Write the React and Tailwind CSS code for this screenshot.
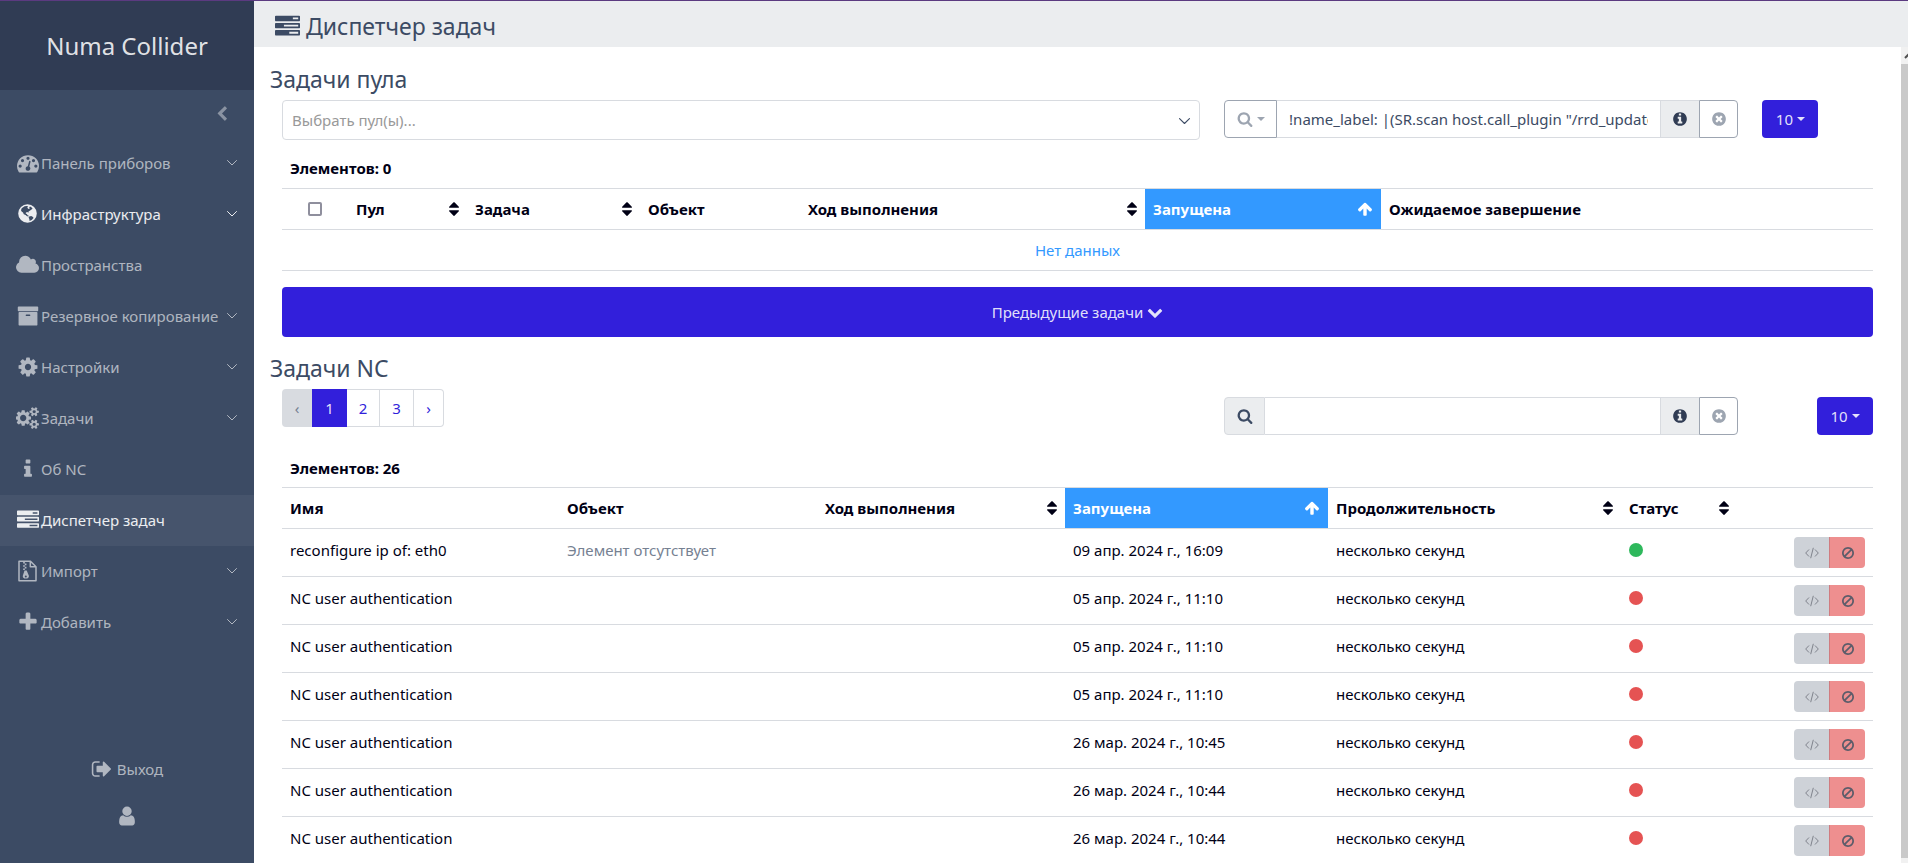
import React, { useState } from "react";

const PATHS = {
  dashboard:
    "M384 1152q0-53-37.5-90.5t-90.5-37.5-90.5 37.5-37.5 90.5 37.5 90.5 90.5 37.5 90.5-37.5 37.5-90.5zm192-448q0-53-37.5-90.5t-90.5-37.5-90.5 37.5-37.5 90.5 37.5 90.5 90.5 37.5 90.5-37.5 37.5-90.5zm428 481l101-382q6-26-7.5-48.5t-38.5-29.5-48 6.5-30 39.5l-101 382q-60 5-107 43.5t-63 98.5q-20 77 20 146t117 89 146-20 89-117q16-60-6-117t-72-91zm660-33q0-53-37.5-90.5t-90.5-37.5-90.5 37.5-37.5 90.5 37.5 90.5 90.5 37.5 90.5-37.5 37.5-90.5zm-640-640q0-53-37.5-90.5t-90.5-37.5-90.5 37.5-37.5 90.5 37.5 90.5 90.5 37.5 90.5-37.5 37.5-90.5zm448 192q0-53-37.5-90.5t-90.5-37.5-90.5 37.5-37.5 90.5 37.5 90.5 90.5 37.5 90.5-37.5 37.5-90.5zm320 448q0 261-141 483-19 29-54 29h-1402q-35 0-54-29-141-221-141-483 0-182 71-348t191-286 286-191 348-71 348 71 286 191 191 286 71 348z",
  tasks:
    "M1024 1408h640v-128h-640v128zm-384-512h1024v-128h-1024v128zm640-512h384v-128h-384v128zm512 832v256q0 26-19 45t-45 19h-1664q-26 0-45-19t-19-45v-256q0-26 19-45t45-19h1664q26 0 45 19t19 45zm0-512v256q0 26-19 45t-45 19h-1664q-26 0-45-19t-19-45v-256q0-26 19-45t45-19h1664q26 0 45 19t19 45zm0-512v256q0 26-19 45t-45 19h-1664q-26 0-45-19t-19-45v-256q0-26 19-45t45-19h1664q26 0 45 19t19 45z",
  cloud:
    "M1856 1152q0 159-112.5 271.5t-271.5 112.5h-1088q-185 0-316.5-131.5t-131.5-316.5q0-132 71-241.5t187-163.5q-2-28-2-43 0-212 150-362t362-150q158 0 286.5 88t187.5 230q70-62 166-62 106 0 181 75t75 181q0 75-41 138 129 30 213 134.5t84 239.5z",
  archive:
    "M1088 832q0-26-19-45t-45-19h-256q-26 0-45 19t-19 45 19 45 45 19h256q26 0 45-19t19-45zm576-192v960q0 26-19 45t-45 19h-1408q-26 0-45-19t-19-45v-960q0-26 19-45t45-19h1408q26 0 45 19t19 45zm64-448v256q0 26-19 45t-45 19h-1536q-26 0-45-19t-19-45v-256q0-26 19-45t45-19h1536q26 0 45 19t19 45z",
  cog: "M1152 896q0-106-75-181t-181-75-181 75-75 181 75 181 181 75 181-75 75-181zm512-109v222q0 12-8 23t-20 13l-185 28q-19 54-39 91 35 50 107 138 10 12 10 25t-9 23q-27 37-99 108t-94 71q-12 0-26-9l-138-108q-44 23-91 38-16 136-29 186-7 28-36 28h-222q-14 0-24.5-8.5t-11.5-21.5l-28-184q-49-16-90-37l-141 107q-10 9-25 9-14 0-25-11-126-114-165-168-7-10-7-23 0-12 8-23 15-21 51-66.5t54-70.5q-27-50-41-99l-183-27q-13-2-21-12.5t-8-23.5v-222q0-12 8-23t19-13l186-28q14-46 39-92-40-57-107-138-10-12-10-24 0-10 9-23 26-36 98.5-107.5t94.5-71.5q13 0 26 10l138 107q44-23 91-38 16-136 29-186 7-28 36-28h222q14 0 24.5 8.5t11.5 21.5l28 184q49 16 90 37l142-107q9-9 24-9 13 0 25 10 129 119 165 170 7 8 7 22 0 12-8 23-15 21-51 66.5t-54 70.5q26 50 41 98l183 28q13 2 21 12.5t8 23.5z",
  cogs: "M832 896q0-106-75-181t-181-75-181 75-75 181 75 181 181 75 181-75 75-181zm768 512q0-52-38-90t-90-38-90 38-38 90q0 53 37.5 90.5t90.5 37.5 90.5-37.5 37.5-90.5zm0-1024q0-52-38-90t-90-38-90 38-38 90q0 53 37.5 90.5t90.5 37.5 90.5-37.5 37.5-90.5zm-384 421v185q0 10-7 19.5t-16 10.5l-155 24q-11 35-32 76 34 48 90 115 7 11 7 20 0 12-7 19-23 30-82.5 89.5t-78.5 59.5q-11 0-21-7l-115-90q-37 19-77 31-11 108-23 155-7 24-30 24h-186q-11 0-20-7.5t-10-17.5l-23-153q-34-10-75-31l-118 89q-7 7-20 7-11 0-21-8-144-133-144-160 0-9 7-19 10-14 41-53t47-61q-23-44-35-82l-152-24q-10-1-17-9.5t-7-19.5v-185q0-10 7-19.5t16-10.5l155-24q11-35 32-76-34-48-90-115-7-11-7-20 0-12 7-20 22-30 82-89t79-59q11 0 21 7l115 90q34-18 77-32 11-108 23-154 7-24 30-24h186q11 0 20 7.5t10 17.5l23 153q34 10 75 31l118-89q8-7 20-7 11 0 21 8 144 133 144 160 0 8-7 19-12 16-42 54t-45 60q23 48 34 82l152 23q10 2 17 10.5t7 19.5zm640 533v140q0 16-149 31-12 27-30 52 51 113 51 138 0 4-4 7-122 71-124 71-8 0-46-47t-52-68q-20 2-30 2t-30-2q-14 21-52 68t-46 47q-2 0-124-71-4-3-4-7 0-25 51-138-18-25-30-52-149-15-149-31v-140q0-16 149-31 13-29 30-52-51-113-51-138 0-4 4-7 4-2 35-20t59-34 30-16q8 0 46 46.5t52 67.5q20-2 30-2t30 2q51-71 92-112l6-2q4 0 124 70 4 3 4 7 0 25-51 138 17 23 30 52 149 15 149 31zm0-1024v140q0 16-149 31-12 27-30 52 51 113 51 138 0 4-4 7-122 71-124 71-8 0-46-47t-52-68q-20 2-30 2t-30-2q-14 21-52 68t-46 47q-2 0-124-71-4-3-4-7 0-25 51-138-18-25-30-52-149-15-149-31v-140q0-16 149-31 13-29 30-52-51-113-51-138 0-4 4-7 4-2 35-20t59-34 30-16q8 0 46 46.5t52 67.5q20-2 30-2t30 2q51-71 92-112l6-2q4 0 124 70 4 3 4 7 0 25-51 138 17 23 30 52 149 15 149 31z",
  info: "M1216 1344v128q0 26-19 45t-45 19h-512q-26 0-45-19t-19-45v-128q0-26 19-45t45-19h64v-384h-64q-26 0-45-19t-19-45v-128q0-26 19-45t45-19h384q26 0 45 19t19 45v576h64q26 0 45 19t19 45zm-128-1152v192q0 26-19 45t-45 19h-256q-26 0-45-19t-19-45v-192q0-26 19-45t45-19h256q26 0 45 19t19 45z",
  plus: "M1600 736v192q0 40-28 68t-68 28h-416v416q0 40-28 68t-68 28h-192q-40 0-68-28t-28-68v-416h-416q-40 0-68-28t-28-68v-192q0-40 28-68t68-28h416v-416q0-40 28-68t68-28h192q40 0 68 28t28 68v416h416q40 0 68 28t28 68z",
  signOut:
    "M704 1440q0 4 1 20t.5 26.5-3 23.5-10 19.5-20.5 6.5h-320q-119 0-203.5-84.5t-84.5-203.5v-704q0-119 84.5-203.5t203.5-84.5h320q13 0 22.5 9.5t9.5 22.5q0 4 1 20t.5 26.5-3 23.5-10 19.5-20.5 6.5h-320q-66 0-113 47t-47 113v704q0 66 47 113t113 47h312l11.5 1 11.5 3 8 5.5 7 9 2 13.5zm928-544q0 26-19 45l-544 544q-19 19-45 19t-45-19-19-45v-288h-448q-26 0-45-19t-19-45v-384q0-26 19-45t45-19h448v-288q0-26 19-45t45-19 45 19l544 544q19 19 19 45z",
  user: "M1536 1399q0 109-62.5 187t-150.5 78h-854q-88 0-150.5-78t-62.5-187q0-85 8.5-160.5t31.5-152 58.5-131 94-89 134.5-34.5q131 128 313 128t313-128q76 0 134.5 34.5t94 89 58.5 131 31.5 152 8.5 160.5zm-256-887q0 159-112.5 271.5t-271.5 112.5-271.5-112.5-112.5-271.5 112.5-271.5 271.5-112.5 271.5 112.5 112.5 271.5z",
  infoCircle:
    "M1152 1376v-160q0-14-9-23t-23-9h-96v-512q0-14-9-23t-23-9h-320q-14 0-23 9t-9 23v160q0 14 9 23t23 9h96v320h-96q-14 0-23 9t-9 23v160q0 14 9 23t23 9h448q14 0 23-9t9-23zm-128-896v-160q0-14-9-23t-23-9h-192q-14 0-23 9t-9 23v160q0 14 9 23t23 9h192q14 0 23-9t9-23zm640 416q0 209-103 385.5t-279.5 279.5-385.5 103-385.5-103-279.5-279.5-103-385.5 103-385.5 279.5-279.5 385.5-103 385.5 103 279.5 279.5 103 385.5z",
  timesCircle:
    "M1277 1122q0-26-19-45l-181-181 181-181q19-19 19-45 0-27-19-46l-90-90q-19-19-46-19-26 0-45 19l-181 181-181-181q-19-19-45-19-27 0-46 19l-90 90q-19 19-19 46 0 26 19 45l181 181-181 181q-19 19-19 45 0 27 19 46l90 90q19 19 46 19 26 0 45-19l181-181 181 181q19 19 45 19 27 0 46-19l90-90q19-19 19-46zm387-226q0 209-103 385.5t-279.5 279.5-385.5 103-385.5-103-279.5-279.5-103-385.5 103-385.5 279.5-279.5 385.5-103 385.5 103 279.5 279.5 103 385.5z",
  search:
    "M1216 832q0-185-131.5-316.5t-316.5-131.5-316.5 131.5-131.5 316.5 131.5 316.5 316.5 131.5 316.5-131.5 131.5-316.5zm512 832q0 52-38 90t-90 38q-54 0-90-38l-343-342q-179 124-399 124-143 0-273.5-55.5t-225-150-150-225-55.5-273.5 55.5-273.5 150-225 225-150 273.5-55.5 273.5 55.5 225 150 150 225 55.5 273.5q0 220-124 399l343 343q37 37 37 90z",
  chevronLeft:
    "M1427 301l-531 531 531 531q19 19 19 45t-19 45l-166 166q-19 19-45 19t-45-19l-742-742q-19-19-19-45t19-45l742-742q19-19 45-19t45 19l166 166q19 19 19 45t-19 45z",
  chevronDown:
    "M1683 808l-742 741q-19 19-45 19t-45-19l-742-741q-19-19-19-45.5t19-45.5l166-165q19-19 45-19t45 19l531 531 531-531q19-19 45-19t45 19l166 165q19 19 19 45.5t-19 45.5z",
  arrowUp:
    "M1675 971q0 51-37 90l-75 75q-38 38-91 38-54 0-90-38l-294-293v704q0 52-37.5 84.5t-90.5 32.5h-128q-53 0-90.5-32.5t-37.5-84.5v-704l-294 293q-36 38-90 38t-90-38l-75-75q-38-38-38-90 0-53 38-91l651-651q35-37 90-37 54 0 91 37l651 651q37 39 37 91z",
  sort: "M1408 1088q0 26-19 45l-448 448q-19 19-45 19t-45-19l-448-448q-19-19-19-45t19-45 45-19h896q26 0 45 19t19 45zm0-384q0 26-19 45t-45 19h-896q-26 0-45-19t-19-45 19-45l448-448q19-19 45-19t45 19l448 448q19 19 19 45z",
  ban: "M1440 893q0-161-87-295l-754 753q137 89 297 89 111 0 211.5-43.5t173.5-116.5 116-174.5 43-212.5zm-999 299l755-754q-135-91-300-91-148 0-273 73t-198 199-73 274q0 162 89 299zm1223-299q0 157-61 300t-163.5 246-245 164-298.5 61-298.5-61-245-164-163.5-246-61-300 61-299.5 163.5-245.5 245-164 298.5-61 298.5 61 245 164 163.5 245.5 61 299.5z",
};

function Icon({ name, className, viewBox = "0 0 1792 1792" }) {
  return (
    <svg viewBox={viewBox} fill="currentColor" className={className} aria-hidden="true">
      <path d={PATHS[name]} />
    </svg>
  );
}

function Globe({ className }) {
  return (
    <svg viewBox="0 0 19 19" fill="currentColor" fillRule="evenodd" className={className} aria-hidden="true">
      <path d="M9.5 0.2a9.3 9.3 0 1 0 0 18.6a9.3 9.3 0 1 0 0-18.6z M6.6 2.2L3.7 4.2L3 6.3L3.6 7.6L5 8.6L5.8 10.2L7.6 11.1L9 12.2L10.4 12.4L10.8 11.7L9.2 11L9.1 9.9L7.8 9.7L7.9 8.4L9.6 8.1L10.2 8.9L10.6 7.6L12.2 6.4L13.5 5.6L14.6 4.7L13.4 3.2L12 2.6L11.2 3.4L11.8 4.4L10.6 4.9L9.2 3.8L10.2 2.6L8.8 1.9z M11.2 12.5L13.2 12L15 13L15.5 14.1L13.7 15.9L11.6 17L11.3 14.9L10.6 13.6z" />
    </svg>
  );
}

function ZipFile({ className }) {
  return (
    <svg
      viewBox="0 0 19 22"
      fill="none"
      stroke="currentColor"
      strokeWidth="1.5"
      strokeLinejoin="round"
      className={className}
      aria-hidden="true"
    >
      <path d="M1 1.2h11.5l5.5 5.5v14.1H1z M12.3 1.4v5.4h5.5" />
      <path d="M6 2v1.6 M7.6 3.6v1.6 M6 5.2v1.6 M7.6 6.8v1.6 M6 8.4v1.6" strokeWidth="1.7" />
      <path d="M6.5 10.5h2.2l2.2 5.2q0.3 2.8-3.1 2.8t-3-2.8z M7.8 15.4a1 1 0 1 0 0 2a1 1 0 1 0 0-2z" fill="currentColor" fillRule="evenodd" stroke="none" />
    </svg>
  );
}

// Thin chevron used by the menu groups and the select
function Chevron({ className }) {
  return (
    <svg
      viewBox="0 0 10 6"
      fill="none"
      stroke="currentColor"
      strokeLinecap="round"
      strokeLinejoin="round"
      className={className}
      aria-hidden="true"
    >
      <path d="M0.5 0.5 L5 5 L9.5 0.5" />
    </svg>
  );
}

function Caret() {
  return <span className="border-x-4 border-t-4 border-x-transparent border-t-current" />;
}

const menu = [
  { label: "Панель приборов", icon: <Icon name="dashboard" className="size-[22px]" />, group: true },
  { label: "Инфраструктура", icon: <Globe className="size-[19px]" />, group: true, bright: true },
  { label: "Пространства", icon: <Icon name="cloud" viewBox="-64 0 1920 1792" className="h-[22px] w-[23px]" /> },
  { label: "Резервное копирование", icon: <Icon name="archive" className="size-[22px]" />, group: true },
  { label: "Настройки", icon: <Icon name="cog" className="size-[22px]" />, group: true },
  { label: "Задачи", icon: <Icon name="cogs" viewBox="0 0 1856 1792" className="h-[22px] w-[23px]" />, group: true },
  { label: "Об NC", icon: <Icon name="info" className="size-[22px]" /> },
  { label: "Диспетчер задач", icon: <Icon name="tasks" className="size-[22px]" />, bright: true, active: true },
  { label: "Импорт", icon: <ZipFile className="h-[22px] w-[19px]" />, group: true },
  { label: "Добавить", icon: <Icon name="plus" className="size-[22px]" />, group: true },
];

const poolColumns = [
  { label: "Пул", width: "w-[119px]", sort: true },
  { label: "Задача", width: "w-[173px]", sort: true },
  { label: "Объект", width: "w-[160px]" },
  { label: "Ход выполнения", width: "w-[345px]", sort: true },
  { label: "Запущена", width: "w-[236px]", sorted: true },
  { label: "Ожидаемое завершение" },
];

const taskColumns = [
  { label: "Имя", width: "w-[277px]" },
  { label: "Объект", width: "w-[258px]" },
  { label: "Ход выполнения", width: "w-[248px]", sort: true },
  { label: "Запущена", width: "w-[263px]", sorted: true },
  { label: "Продолжительность", width: "w-[293px]", sort: true },
  { label: "Статус", width: "w-[116px]", sort: true },
];

const tasks = [
  { name: "reconfigure ip of: eth0", object: "Элемент отсутствует", started: "09 апр. 2024 г., 16:09", ok: true },
  { name: "NC user authentication", started: "05 апр. 2024 г., 11:10" },
  { name: "NC user authentication", started: "05 апр. 2024 г., 11:10" },
  { name: "NC user authentication", started: "05 апр. 2024 г., 11:10" },
  { name: "NC user authentication", started: "26 мар. 2024 г., 10:45" },
  { name: "NC user authentication", started: "26 мар. 2024 г., 10:44" },
  { name: "NC user authentication", started: "26 мар. 2024 г., 10:44" },
];

function Sidebar() {
  return (
    <aside className="flex w-[254px] shrink-0 flex-col bg-[#3c4b64] text-white/60">
      <div className="flex h-[89px] items-center justify-center bg-[#303c54] text-2xl text-white/87">
        Numa Collider
      </div>
      <div className="flex h-12 items-center justify-end pr-6">
        <button aria-label="Свернуть меню" className="text-white/40">
          <Icon name="chevronLeft" className="size-4" />
        </button>
      </div>
      <nav>
        {menu.map((item) => (
          <a
            key={item.label}
            href="#"
            className={`flex h-[51px] items-center pb-[2px] pl-4 pr-[17px] ${item.bright ? "text-white/90" : ""} ${
              item.active ? "bg-[#46546c]" : ""
            }`}
          >
            <span className="flex w-[23px] shrink-0 justify-center">{item.icon}</span>
            <span className="ml-[2px] flex-1 whitespace-nowrap">{item.label}</span>
            {item.group && <Chevron className="w-[10px] shrink-0" />}
          </a>
        ))}
      </nav>
      <div className="mt-auto flex flex-col items-center gap-6 pb-9">
        <a href="#" className="flex items-center gap-1">
          <Icon name="signOut" className="size-[22px]" />
          Выход
        </a>
        <button aria-label="Профиль">
          <Icon name="user" className="size-[22px]" />
        </button>
      </div>
    </aside>
  );
}

function SearchBox({ label, value, onChange, dropdown }) {
  return (
    <div className="flex h-[38px] text-[#3c4b64]">
      {dropdown ? (
        <button
          aria-label="Фильтры"
          className="flex w-[53px] items-center justify-center gap-1 rounded-l border border-[#9da5b1] text-[#9da5b1]"
        >
          <Icon name="search" className="size-4" />
          <Caret />
        </button>
      ) : (
        <span className="flex w-[41px] items-center justify-center rounded-l border border-[#d8dbe0] bg-[#ebedef] text-[#3c4b64]">
          <Icon name="search" className="size-4" />
        </span>
      )}
      <input
        type="text"
        aria-label={label}
        value={value}
        onChange={(e) => onChange(e.target.value)}
        className="min-w-0 flex-1 border-y border-[#d8dbe0] px-3 outline-none"
      />
      <button
        aria-label="Справка"
        className="flex w-[39px] items-center justify-center border border-r-0 border-[#d8dbe0] bg-[#ebedef] text-[#303c54]"
      >
        <Icon name="infoCircle" className="size-4" />
      </button>
      <button
        aria-label="Очистить"
        className="flex w-[39px] items-center justify-center rounded-r border border-[#9da5b1] text-[#9da5b1]"
      >
        <Icon name="timesCircle" className="size-4" />
      </button>
    </div>
  );
}

function PageSize() {
  return (
    <button className="flex h-[38px] w-14 items-center justify-center gap-1 rounded bg-[#321fdb] text-white/87">
      10 <Caret />
    </button>
  );
}

function HeadCell({ column }) {
  return (
    <th
      scope="col"
      className={`p-2 text-left font-bold ${column.width || ""} ${column.sorted ? "bg-[#3399ff] text-white" : ""}`}
    >
      <div className="flex items-center justify-between whitespace-nowrap">
        {column.label}
        {column.sort && <Icon name="sort" viewBox="384 0 1024 1792" className="h-[18px] w-[10px]" />}
        {column.sorted && <Icon name="arrowUp" className="size-4" />}
      </div>
    </th>
  );
}

function App() {
  const [filter, setFilter] = useState('!name_label: |(SR.scan host.call_plugin "/rrd_updates")');
  const [query, setQuery] = useState("");

  return (
    <div className="flex h-screen overflow-hidden border-t border-[#5b3a80] bg-white font-['Noto_Sans','Open_Sans',sans-serif] text-[15px] leading-6 text-[#3c4b64]">
      <Sidebar />

      <div className="flex min-w-0 flex-1 flex-col">
        <header className="flex h-[46px] shrink-0 items-center gap-[6px] bg-[#ebedef] pl-[21px] pt-1">
          <Icon name="tasks" className="size-[25px]" />
          <h1 className="text-[23px]">Диспетчер задач</h1>
        </header>

        <div className="flex min-h-0 flex-1">
          <main className="min-w-0 flex-1 overflow-hidden px-4 pt-[14px]">
            <h2 className="mb-[2px] text-[23px] leading-[37px]">Задачи пула</h2>
            <div className="px-3">
              <div className="grid grid-cols-12 gap-6">
                <div className="relative col-span-7">
                  <select
                    aria-label="Пулы"
                    className="h-10 w-full appearance-none rounded border border-[#d8dbe0] bg-white px-[9px] text-[#999999]"
                  >
                    <option>Выбрать пул(ы)...</option>
                  </select>
                  <Chevron className="pointer-events-none absolute right-[10px] top-[18px] w-[11px] text-[#3c4b64]" />
                </div>
                <div className="col-span-4">
                  <SearchBox label="Поиск задач пула" value={filter} onChange={setFilter} dropdown />
                </div>
                <PageSize />
              </div>

              <table className="mt-4 w-full table-fixed text-[#000015]">
                <caption className="px-2 pb-2 text-left font-bold">Элементов: 0</caption>
                <thead>
                  <tr className="border-y border-[#d8dbe0]">
                    <th className="w-[66px] p-2">
                      <input
                        type="checkbox"
                        aria-label="Выбрать все"
                        className="mx-auto block size-[14px] appearance-none rounded-[2px] border-2 border-[#8f8f9d] bg-white"
                      />
                    </th>
                    {poolColumns.map((column) => (
                      <HeadCell key={column.label} column={column} />
                    ))}
                  </tr>
                </thead>
                <tbody>
                  <tr className="border-b border-[#d8dbe0]">
                    <td colSpan={7} className="p-2 text-center text-[#3399ff]">
                      Нет данных
                    </td>
                  </tr>
                </tbody>
              </table>

              <button className="mt-4 flex h-[50px] w-full items-center justify-center gap-1 rounded bg-[#321fdb] text-white/87">
                Предыдущие задачи <Icon name="chevronDown" className="size-4" />
              </button>
            </div>

            <h2 className="mb-[2px] mt-[13px] text-[23px] leading-[37px]">Задачи NC</h2>
            <div className="px-3">
              <div className="grid grid-cols-12 gap-6">
                <div className="col-span-7 flex h-[38px]">
                  <button disabled className="w-[30px] rounded-l bg-[#d8dbe0] text-[#768192]">
                    ‹
                  </button>
                  <button className="w-[35px] bg-[#321fdb] text-white/87">1</button>
                  <button className="w-[33px] border-y border-r border-[#d8dbe0] text-[#321fdb]">2</button>
                  <button className="w-[34px] border-y border-r border-[#d8dbe0] text-[#321fdb]">3</button>
                  <button className="w-[30px] rounded-r border-y border-r border-[#d8dbe0] text-[#321fdb]">›</button>
                </div>
                <div className="col-span-4 pt-2">
                  <SearchBox label="Поиск задач NC" value={query} onChange={setQuery} />
                </div>
                <div className="flex justify-end pt-2">
                  <PageSize />
                </div>
              </div>

              <table className="mt-[21px] w-full table-fixed text-[#000015]">
                <caption className="px-2 pb-[7px] text-left font-bold">Элементов: 26</caption>
                <thead>
                  <tr className="border-y border-[#d8dbe0]">
                    {taskColumns.map((column) => (
                      <HeadCell key={column.label} column={column} />
                    ))}
                    <th />
                  </tr>
                </thead>
                <tbody>
                  {tasks.map((task, index) => (
                    <tr key={index} className="border-b border-[#d8dbe0] align-top">
                      <td className="px-2 py-[9px]">{task.name}</td>
                      <td className="px-2 py-[9px] text-[#768192]">{task.object}</td>
                      <td />
                      <td className="px-2 py-[9px]">{task.started}</td>
                      <td className="px-2 py-[9px]">несколько секунд</td>
                      <td className="px-2 py-[14px]">
                        <span
                          className={`block size-[14px] rounded-full ${task.ok ? "bg-[#2eb85c]" : "bg-[#e55353]"}`}
                        />
                      </td>
                      <td className="p-2">
                        <div className="flex h-[31px] justify-end text-[#5c5c6a]">
                          <button
                            disabled
                            aria-label="Показать код"
                            className="flex w-[35px] items-center justify-center rounded-l bg-[#ced2d8] text-[#7f838c]"
                          >
                            <svg viewBox="0 0 14 12" fill="none" stroke="currentColor" className="h-3 w-[14px]">
                              <path d="M4 2.5 L0.7 6 L4 9.5 M10 2.5 L13.3 6 L10 9.5 M8.3 0.8 L5.7 11.2" />
                            </svg>
                          </button>
                          <button
                            disabled
                            aria-label="Отменить"
                            className="flex w-9 items-center justify-center rounded-r border-l border-[#d07c80] bg-[#ee8f8f]"
                          >
                            <Icon name="ban" className="size-[14px]" />
                          </button>
                        </div>
                      </td>
                    </tr>
                  ))}
                </tbody>
              </table>
            </div>
          </main>

          <div className="flex w-[7px] shrink-0 flex-col overflow-hidden bg-[#f1f1f1] pb-[5px]" aria-hidden="true">
            <svg viewBox="0 0 7 17" className="h-[17px] w-[7px] text-[#505050]">
              <path d="M4 11 L8.5 6.5" fill="none" stroke="currentColor" strokeWidth="2" />
            </svg>
            <div className="flex-1 bg-[#c9c9c9]" />
          </div>
        </div>
      </div>
    </div>
  );
}

export default App;
